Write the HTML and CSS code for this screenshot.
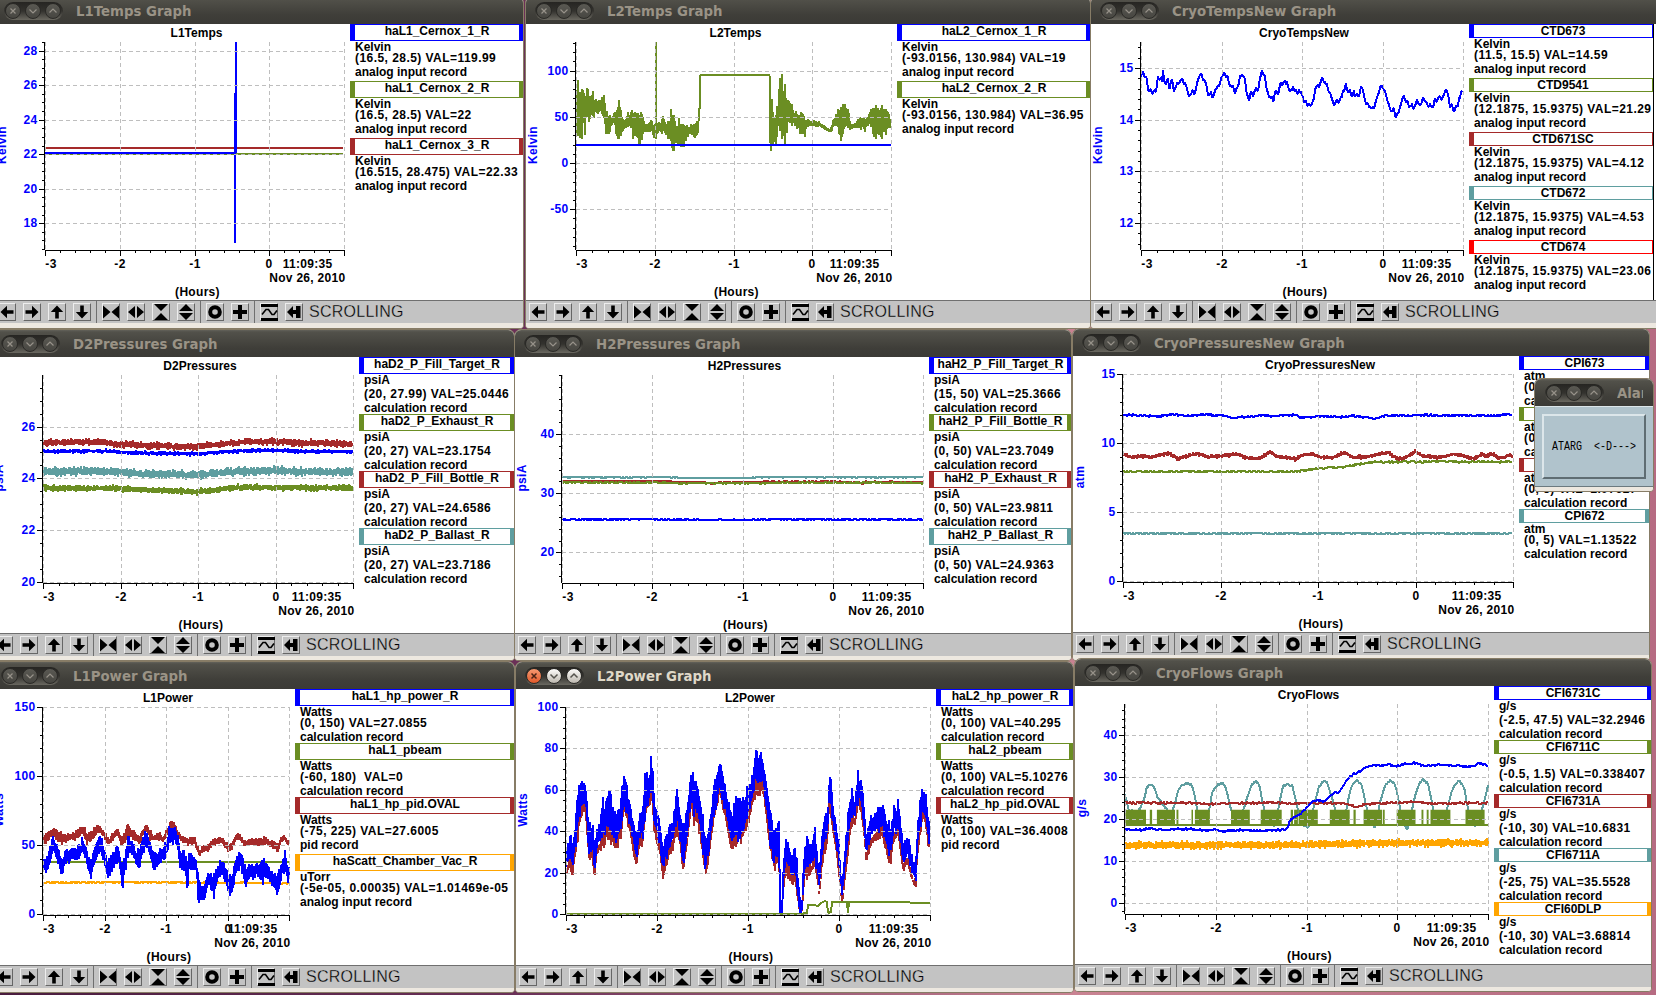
FILE: index.html
```html
<!DOCTYPE html>
<html lang="en">
<head>
    <meta charset="UTF-8">
    <meta name="viewport" content="width=device-width, initial-scale=1.0">
    <title>Target Graphs</title>
    <link rel="stylesheet" href="styles.css">
</head>
<body>
    <main class="desktop" id="desktop"></main>

    <section class="window alarm" id="alarm">
        <header class="titlebar">
            <div class="controls"></div>
            <h2>Alarm Handler</h2>
        </header>
        <div class="alarm-body">
            <button class="alarm-button"><span>ATARG&nbsp; &lt;-D---&gt;</span></button>
        </div>
        <div class="sill"></div>
    </section>

    <script src="graphs.js"></script>
</body>
</html>
```

FILE: styles.css
```css
* { box-sizing: border-box; }
body { margin: 0; width: 1656px; height: 995px; overflow: hidden; position: relative; font-family: "Liberation Sans", Arial, sans-serif; background: linear-gradient(to right, #4a1c3e 0, #6b3058 520px, #c98392 1075px, #b66b82 1656px); }
.desktop { position: relative; width: 1656px; height: 995px; overflow: hidden; }

/* window frame */
.window { position: absolute; display: flex; flex-direction: column; border: 1px solid #877c66; border-radius: 7px 7px 4px 4px; overflow: hidden; background: #ede8e0; }
.titlebar { flex: none; height: 27px; display: flex; align-items: center; padding: 1px 0 0 9px; background: linear-gradient(#63625a 0, #52514a 2px, #3f3e39 18px, #3b3a36 100%); }
.titlebar h2 { margin: 1px 0 0 13px; font: bold 13.3px "DejaVu Sans", sans-serif; color: #9a9386; white-space: nowrap; }
.controls { flex: none; display: flex; gap: 4px; padding: 1px; width: 59px; height: 18px; border-radius: 9px; background: linear-gradient(#262522, #33322e 50%, #6a6860); }
.control { width: 16px; height: 16px; border-radius: 50%; border: 1px solid #2b2a27; background: linear-gradient(#5a5953, #474641); }
.control svg { display: block; width: 14px; height: 14px; fill: none; stroke: #97928a; stroke-width: 1.2; }
.active .titlebar h2 { color: #dfd8c8; }
.active .control { background: linear-gradient(#fdfcfa, #bdb8af); }
.active .control svg { stroke: #55534d; stroke-width: 1.5; }
.active .control:first-child { background: linear-gradient(#f59a72, #e2592a); }
.active .control:first-child svg { stroke: #4a2416; }
.sill { flex: 1; background: #ede8e0; }

/* graph area */
.content { flex: none; display: flex; background: #fff; overflow: hidden; }
.plot { display: block; flex: none; font: bold 12px "Liberation Sans", Arial, sans-serif; letter-spacing: 0.3px; }
.plot .title { letter-spacing: 0; }
.plot text { text-anchor: middle; }
.plot .left { text-anchor: end; }
.plot .y-label { fill: #0000ff; }
.axis { stroke: #000; stroke-width: 1; fill: none; shape-rendering: crispEdges; }
.grid { stroke: #bebebe; stroke-width: 1; stroke-dasharray: 4 3; fill: none; shape-rendering: crispEdges; }
.trace { fill: none; stroke-width: 2; stroke-linejoin: bevel; shape-rendering: crispEdges; }

.legend { flex: 1; min-width: 0; font-weight: bold; font-size: 12px; line-height: 11px; white-space: nowrap; }
.entry { padding-bottom: 1px; }
.pv { border: 1px solid; border-left-width: 5px; border-right-width: 4px; padding: 1px 0 0; display: flex; justify-content: center; }
.pv span { color: #000; }
.pv.deep { padding-bottom: 3px; }
.entry p { margin: 0; padding-left: 5px; position: relative; top: 1px; }
.entry p.deep { padding-bottom: 3px; }
.entry p.range { letter-spacing: 0.45px; }
.cut .legend { flex: none; width: 185px; border-right: 1px solid #000; }
.cut .pv { border-right-width: 1px; }

/* toolbar */
.toolbar { flex: none; height: 23px; display: flex; align-items: center; padding-left: 3px; border-top: 1px solid #6f6f6f; background: #c3c3c3; overflow: hidden; }
.group { display: flex; flex: none; gap: 7px; height: 22px; align-items: center; padding-right: 5px; }
.group + .group { border-left: 1px solid #6f6f6f; padding-left: 5px; }
.tool { width: 18px; height: 18px; padding: 0; border: 1px solid; border-color: #ededed #666 #666 #ededed; background: #c3c3c3; }
.tool svg { display: block; width: 18px; height: 18px; margin: -1px; fill: #000; }
.mode { font-size: 16px; letter-spacing: 0.25px; color: #000; margin-left: 1px; -webkit-text-stroke: 0.3px #c3c3c3; }

/* alarm handler */
.alarm { left: 1534px; top: 378px; width: 120px; height: 114px; }
.alarm .titlebar { padding-left: 10px; }
.alarm .titlebar h2 { width: 26px; overflow: hidden; }
.alarm-body { flex: none; height: 81px; display: flex; padding: 7px; background: #b0c3cc; border-top: 1px solid #dce6ea; border-bottom: 1px solid #6c7a80; }
.alarm-button { flex: 1; padding: 0; border: 2px solid; border-color: #dce6ea #5f6d73 #5f6d73 #dce6ea; background: #b0c3cc; font: 10px "Liberation Mono", monospace; color: #000; }
.alarm-button span { display: block; transform: scaleY(1.3); white-space: pre; }
```

FILE: graphs.js
```js
const BLUE = '#0000ff', OLIVE = '#6b8e23', BROWN = '#a52a2a', TEAL = '#5f9ea0', RED = '#ff0000', ORANGE = '#ffa500';

// small repeatable random so that the traces look the same on each load
let seed = 7;
function rnd() {
    seed = (seed * 16807) % 2147483647;
    return seed / 2147483647;
}

function rows(text, n) {
    const v = text.trim().split(/[\s,;]+/).map(Number);
    const out = [];
    for (let i = 0; i < v.length; i += n) out.push(v.slice(i, i + n));
    return out;
}
const line = (color, pts, noise = 0) => ({ color, pts: rows(pts, 2), noise });
const thick = (color, pts, h) => ({ color, band: rows(pts, 2).map(p => [p[0], p[1] - h, p[1] + h]) });
const band = (color, pts) => ({ color, band: rows(pts, 3) });

const l2power = `155,590,630;160,560,610;168,525,600;173,560,640;180,500,570;187,400,520;192,365,480;200,362,450;207,360,430;213,420,500;
219,490,600;228,480,580;234,560,640;240,500,570;248,500,550;255,430,540;262,450,540;268,390,510;277,400,520;285,450,540;293,460,550;
300,450,530;308,410,500;316,330,430;325,400,470;333,440,510;342,500,570;350,520,600;358,460,540;367,450,530;373,350,470;378,320,430;
385,370,420;391,280,400;397,400,500;405,450,530;412,480,560;422,560,640;430,530,600;440,490,570;450,480,550;460,380,500;468,460,530;
478,500,620;488,470,550;495,380,470;501,325,430;508,370,470;515,350,470;522,420,500;530,450,560;540,540,630;548,500,580;556,450,510;
565,340,450;572,350,420;578,295,380;585,340,430;592,370,450;600,430,500;610,470,560;620,440,540;628,400,530;638,430,520;648,410,500;
656,380,470;664,370,440;672,320,400;677,256,380;685,300,390;693,280,370;700,320,400;706,370,450;714,430,530;722,480,580;730,520,610;
736,480,590;742,490,620;744,700,767;750,740,767;754,590,660;762,540,620;770,550,640;778,590,660;784,560,640;792,620,700;798,690,765;
804,740,767;808,620,700;814,550,620;820,510,640;828,570,620;836,540,610;840,510,600;848,590,650;852,640,690;858,550,620;866,470,560;
875,450,540;880,338,420;885,350,460;890,440,500;898,490,550;906,540,620;912,640,690;916,650,715;922,590,650;930,480,570;938,400,500;
944,400,470;950,430,480;958,335,430;964,360,430;968,350,450;974,430,500;982,530,590;990,480,550;1000,470,530;1010,460,520;
1018,440,510;1026,430,510;1034,480,550;1042,490,580;1050,510,590;1056,450,530;1063,460,520;1069,420,500;1076,490,560;1084,560,620;
1090,540,600;1096,530,590;1104,570,630;1112,610,650;1118,590,670;1122,500,590;1128,440,520;1134,400,480;1139,385,450;1146,420,490;
1152,470,540;1156,500,550`;

const graphs = [
    {
        name: 'L1Temps', frame: [-6, -4, 530, 333], area: [45, 42, 344, 250], legendX: 350,
        unit: 'Kelvin', range: [16.5, 28.5], ticks: [18, 20, 22, 24, 26, 28], minor: 0.5, scan: [134, 1020, 126, 750],
        pvs: [
            ['haL1_Cernox_1_R', BLUE, 'Kelvin', '(16.5, 28.5) VAL=119.99', 'analog input record'],
            ['haL1_Cernox_2_R', OLIVE, 'Kelvin', '(16.5, 28.5) VAL=22', 'analog input record'],
            ['haL1_Cernox_3_R', BROWN, 'Kelvin', '(16.515, 28.475) VAL=22.33', 'analog input record']
        ],
        traces: [
            line(BROWN, '134,444 1020,444', 0.8),
            line(OLIVE, '134,463 1020,463', 0.4),
            line(BLUE, '134,460 698,460 698,729 698,280 701,280 701,126 701,460')
        ]
    },
    {
        name: 'L2Temps', frame: [525, -4, 566, 333], area: [576, 42, 891, 250], legendX: 897,
        unit: 'Kelvin', range: [-93.0156, 130.984], ticks: [-50, 0, 50, 100], minor: 10, scan: [153, 1013, 126, 750],
        pvs: [
            ['haL2_Cernox_1_R', BLUE, 'Kelvin', '(-93.0156, 130.984) VAL=19', 'analog input record'],
            ['haL2_Cernox_2_R', OLIVE, 'Kelvin', '(-93.0156, 130.984) VAL=36.95', 'analog input record']
        ],
        traces: [
            band(OLIVE, `155,235,420;158,235,430;162,265,405;170,265,390;175,270,385;183,255,378;190,265,365;200,285,350;205,295,342;
                215,295,338;222,290,345;229,283,355;235,325,405;243,345,395;255,340,370;262,330,400;270,295,430;277,335,400;283,365,395;
                290,350,385;300,330,380;308,325,405;316,335,425;324,342,445;332,335,425;340,368,395;350,372,395;358,350,395;366,375,415;
                372,360,405;380,365,400;390,345,395;400,372,410;410,340,435;415,340,460;425,360,440;435,365,440;445,375,440;455,378,410;
                465,372,400;475,370,415;485,365,405;489,330,350`),
            line(OLIVE, '371,126 371,400'),
            line(OLIVE, '486,400 489,330 491,322 491,225 680,225 684,232 684,430'),
            band(OLIVE, `684,290,430;688,320,465;694,320,465;700,330,440;706,300,400;709,240,390;714,225,430;720,260,430;728,280,400;
                735,290,370;745,320,375;752,340,375;760,335,390;770,335,410;780,350,415;785,358,375;797,358,385;810,363,378;825,370,382;
                845,385,398;852,380,395;858,355,375;868,340,385;878,310,425;890,312,380;900,340,390;905,370,390;915,370,385;925,355,385;
                935,350,385;945,355,390;955,335,375;962,325,390;970,310,425;980,320,410;990,325,415;1000,325,415;1006,330,380;1012,350,385`),
            line(BLUE, '153,435 1012,435')
        ]
    },
    {
        name: 'CryoTempsNew', frame: [1090, -4, 570, 333], area: [1141, 42, 1463, 250], legendX: 1469, cut: true,
        unit: 'Kelvin', range: [11.5, 15.5], ticks: [12, 13, 14, 15], minor: 0.2, scan: [155, 1040, 126, 750],
        pvs: [
            ['CTD673', BLUE, 'Kelvin', '(11.5, 15.5) VAL=14.59', 'analog input record'],
            ['CTD9541', OLIVE, 'Kelvin', '(12.1875, 15.9375) VAL=21.29', 'analog input record'],
            ['CTD671SC', BROWN, 'Kelvin', '(12.1875, 15.9375) VAL=4.12', 'analog input record'],
            ['CTD672', TEAL, 'Kelvin', '(12.1875, 15.9375) VAL=4.53', 'analog input record'],
            ['CTD674', RED, 'Kelvin', '(12.1875, 15.9375) VAL=23.06', 'analog input record']
        ],
        traces: [
            line(BLUE, `155,228;160,205;164,232;170,235;176,275;182,268;188,280;196,268;202,225;207,245;209,222;212,248;216,208;218,245;
                226,245;229,235;233,265;240,240;246,270;254,245;260,250;266,235;272,252;280,255;288,292;296,275;302,278;312,235;318,213;
                322,232;330,238;340,288;346,275;354,302;359,265;366,255;372,250;376,230;383,210;390,232;396,240;402,262;408,248;414,280;
                422,255;427,228;433,220;440,235;446,280;452,295;458,278;464,285;470,268;476,268;480,262;485,218;494,225;498,250;504,285;
                510,288;519,298;526,270;532,280;536,248;542,258;548,247;556,250;562,268;568,262;578,270;590,275;596,270;600,290;606,312;
                612,308;620,320;628,300;636,262;646,255;654,233;660,255;664,248;672,275;680,302;686,310;692,298;700,303;708,285;712,270;
                718,250;723,272;728,268;734,298;740,278;746,290;754,285;760,250;766,280;770,292;778,318;788,325;798,320;806,290;812,265;
                818,255;826,278;834,310;842,328;850,330;856,348;864,338;870,305;877,288;885,302;892,318;900,308;905,320;914,305;922,312;
                932,292;940,315;950,318;956,325;962,292;968,302;974,288;984,295;994,257;998,285;1004,318;1012,322;1018,332;1024,318;
                1030,295;1038,268`, 9)
        ]
    },
    {
        name: 'D2Pressures', frame: [-9, 329, 524, 332], area: [43, 375, 353, 583], legendX: 359,
        unit: 'psiA', range: [20, 27.99], ticks: [20, 22, 24, 26], minor: 0.5, scan: [130, 1061, 143, 765],
        pvs: [
            ['haD2_P_Fill_Target_R', BLUE, 'psiA', '(20, 27.99) VAL=25.0446', 'calculation record'],
            ['haD2_P_Exhaust_R', OLIVE, 'psiA', '(20, 27) VAL=23.1754', 'calculation record'],
            ['haD2_P_Fill_Bottle_R', BROWN, 'psiA', '(20, 27) VAL=24.6586', 'calculation record'],
            ['haD2_P_Ballast_R', TEAL, 'psiA', '(20, 27) VAL=23.7186', 'calculation record']
        ],
        traces: [
            thick(BROWN, '130,345 310,343 360,350 480,354 540,358 600,356 660,350 740,342 830,342 900,346 980,346 1058,350', 10),
            thick(BLUE, '130,371 310,370 400,375 480,377 600,379 660,373 740,369 830,368 900,371 1058,372', 6),
            thick(TEAL, '130,432 230,430 340,431 430,438 540,440 610,440 680,433 830,428 900,431 1058,433', 12),
            thick(OLIVE, '130,481 350,481 430,486 540,490 600,491 650,487 710,478 900,480 1058,480', 9)
        ]
    },
    {
        name: 'H2Pressures', frame: [514, 329, 558, 332], area: [562, 375, 923, 583], legendX: 929,
        unit: 'psiA', range: [15, 50], ticks: [20, 30, 40], minor: 2, scan: [144, 1138, 143, 767],
        pvs: [
            ['haH2_P_Fill_Target_R', BLUE, 'psiA', '(15, 50) VAL=25.3666', 'calculation record'],
            ['haH2_P_Fill_Bottle_R', OLIVE, 'psiA', '(0, 50) VAL=23.7049', 'calculation record'],
            ['haH2_P_Exhaust_R', BROWN, 'psiA', '(0, 50) VAL=23.9811', 'calculation record'],
            ['haH2_P_Ballast_R', TEAL, 'psiA', '(0, 50) VAL=24.9363', 'calculation record']
        ],
        traces: [
            line(TEAL, '144,450 455,450 470,452 660,452 680,450 1138,450', 0.8),
            line(BROWN, '144,461 430,461 460,464 550,466 556,471 562,466 700,463 890,462 965,466 972,470 980,463 1138,464', 1.2),
            line(OLIVE, '144,465 430,466 460,468 700,468 730,466 1110,466 1138,468', 1),
            line(BLUE, '144,577 380,576 480,577 640,578 720,576 1138,577', 1.6)
        ]
    },
    {
        name: 'CryoPressuresNew', frame: [1072, 328, 578, 333], area: [1123, 374, 1513, 582], legendX: 1519,
        unit: 'atm', range: [0, 15], ticks: [0, 5, 10, 15], minor: 1, scan: [152, 1190, 148, 770],
        pvs: [
            ['CPI673', BLUE, 'atm', '(0, 30) VAL=17.9962', 'calculation record'],
            ['CPI9541', OLIVE, 'atm', '(0, 5) VAL=2.89217', 'calculation record'],
            ['CPI671', BROWN, 'atm', '(0, 5) VAL=2.97627', 'calculation record'],
            ['CPI672', TEAL, 'atm', '(0, 5) VAL=1.13522', 'calculation record']
        ],
        traces: [
            line(BLUE, `152,271;180,270;220,274;250,274;285,268;310,273;345,272;372,268;395,271;425,273;445,279;470,276;500,275;525,272;
                560,274;580,271;610,271;628,279;660,275;700,274;740,277;765,273;800,278;830,281;850,273;880,271;920,273;960,270;1000,273;
                1050,271;1090,273;1130,271;1150,273;1172,267;1188,273`, 2.4),
            thick(BROWN, `152,385;172,397;200,393;225,396;250,390;275,385;300,402;320,393;350,385;375,396;410,392;430,390;455,387;475,396;
                498,401;520,398;543,380;560,394;590,397;612,403;630,390;655,387;680,396;710,398;740,382;765,397;800,395;830,388;855,382;
                885,402;905,398;930,380;950,393;1000,397;1030,387;1050,390;1085,400;1110,387;1120,395;1130,384;1150,398;1165,398;1180,390;
                1190,396`, 6),
            line(OLIVE, `152,440;600,440;625,438;660,431;700,429;745,425;780,417;810,412;860,411;900,411;1000,410;1190,411`, 2.6),
            line(TEAL, '152,625 1190,625', 1.8)
        ]
    },
    {
        name: 'L1Power', frame: [-9, 661, 524, 332], area: [43, 707, 289, 915], legendX: 295,
        unit: 'Watts', range: [0, 150], ticks: [0, 50, 100, 150], minor: 10, scan: [130, 869, 148, 770],
        pvs: [
            ['haL1_hp_power_R', BLUE, 'Watts', '(0, 150) VAL=27.0855', 'calculation record'],
            ['haL1_pbeam', OLIVE, 'Watts', '(-60, 180)  VAL=0', 'calculation record'],
            ['haL1_hp_pid.OVAL', BROWN, 'Watts', '(-75, 225) VAL=27.6005', 'pid record'],
            ['haScatt_Chamber_Vac_R', ORANGE, 'uTorr', '(-5e-05, 0.00035) VAL=1.01469e-05', 'analog input record']
        ],
        traces: [
            line(ORANGE, '130,673 400,672 600,673 869,675', 1.6),
            line(OLIVE, '130,612 869,612'),
            band(BROWN, `130,540,560;140,520,560;150,515,545;160,507,530;172,515,550;185,525,560;200,525,550;215,525,545;228,520,545;
                240,510,535;250,500,530;262,525,555;275,520,550;290,500,530;300,498,525;312,515,535;320,530,558;330,540,560;345,515,545;
                355,510,530;365,535,570;380,505,545;390,502,535;400,515,550;420,535,555;430,510,535;440,500,520;452,515,545;462,535,550;
                480,520,545;490,535,555;500,515,540;512,490,510;525,490,520;535,515,540;545,530,550;560,540,560;575,535,558;585,530,560;
                592,555,575;600,575,597;610,560,585;625,560,580;640,545,565;655,535,555;665,535,555;680,548,570;690,560,585;700,545,570;
                708,530,550;720,525,545;735,545,565;750,540,560;770,540,565;785,538,565;800,535,560;815,550,570;825,545,575;836,560,585;
                845,535,555;855,530,548;868,545,565`),
            band(BLUE, `132,600,630;138,600,655;145,580,640;152,555,610;160,525,580;170,560,600;180,590,630;188,600,650;195,565,620;
                205,570,615;215,570,605;230,570,610;240,560,600;248,530,585;258,565,610;265,590,640;273,605,655;283,570,620;292,545,600;
                300,530,580;307,540,600;315,580,630;327,610,670;335,585,640;345,570,620;355,565,610;362,590,640;368,610,690;375,590,640;
                385,530,590;395,540,590;405,570,610;415,580,640;425,550,600;435,520,570;445,525,570;455,570,620;465,580,630;475,580,625;
                490,565,610;500,550,590;507,510,560;515,505,555;525,498,550;533,520,580;540,570,620;550,575,640;558,590,650;562,610,700;
                568,590,640;580,590,640;590,600,630;594,640,720;605,690,730;614,680,720;625,640,680;635,640,690;642,650,720;650,630,670;
                660,605,650;670,605,650;680,630,680;692,660,720;700,640,690;708,595,660;718,580,630;728,590,640;738,630,690;748,610,655;
                760,620,665;770,610,655;780,610,665;790,600,670;800,610,660;812,630,670;822,640,690;832,650,710;840,640,690;848,600,650;
                855,580,640;862,610,660;868,620,670`)
        ]
    },
    {
        name: 'L2Power', frame: [515, 661, 559, 332], area: [566, 707, 930, 915], legendX: 936, active: true,
        unit: 'Watts', range: [0, 100], ticks: [0, 20, 40, 60, 80, 100], minor: 5, scan: [155, 1157, 148, 770],
        pvs: [
            ['haL2_hp_power_R', BLUE, 'Watts', '(0, 100) VAL=40.295', 'calculation record'],
            ['haL2_pbeam', OLIVE, 'Watts', '(0, 100) VAL=5.10276', 'calculation record'],
            ['haL2_hp_pid.OVAL', BROWN, 'Watts', '(0, 100) VAL=36.4008', 'pid record']
        ],
        traces: [
            // the pid output follows the heater power a little lower
            { color: BROWN, band: rows(l2power, 3).map(p => [p[0], Math.min(p[1] + 60, 762), Math.min(p[2] + 26, 766)]) },
            band(BLUE, l2power),
            line(BLUE, '742,490 744,767 750,767 754,600'),
            line(OLIVE, `155,768;808,768;810,765;818,765;820,741;838,740;850,743;858,735;868,728;874,732;876,765;884,762;886,732;928,732;
                930,765;933,732;1100,732;1106,735;1156,735`)
        ]
    },
    {
        name: 'CryoFlows', frame: [1074, 658, 578, 334], area: [1125, 704, 1488, 914], legendX: 1494, contentH: 278,
        unit: 'g/s', range: [-2.5, 47.5], ticks: [0, 10, 20, 30, 40], minor: 2, scan: [157, 1123, 148, 777],
        pvs: [
            ['CFI6731C', BLUE, 'g/s', '(-2.5, 47.5) VAL=32.2946', 'calculation record'],
            ['CFI6711C', OLIVE, 'g/s', '(-0.5, 1.5) VAL=0.338407', 'calculation record'],
            ['CFI6731A', BROWN, 'g/s', '(-10, 30) VAL=10.6831', 'calculation record'],
            ['CFI6711A', TEAL, 'g/s', '(-25, 75) VAL=35.5528', 'calculation record'],
            ['CFI60DLP', ORANGE, 'g/s', '(-10, 30) VAL=3.68814', 'calculation record']
        ],
        traces: [
            line(TEAL, `157,420;165,455;172,470;190,472;198,460;208,430;216,395;226,388;236,402;245,430;258,450;270,465;280,475;288,455;
                298,410;308,390;320,388;332,388;340,410;348,450;355,500;372,500;382,460;390,410;400,395;412,383;424,392;432,430;442,480;
                455,490;465,480;475,455;484,420;495,390;505,378;516,395;524,450;534,490;555,512;562,480;570,430;578,392;590,388;602,390;
                610,430;620,475;630,510;645,515;655,470;665,430;675,390;688,375;698,390;707,430;716,460;725,500;740,500;748,450;756,410;
                766,382;775,378;787,390;794,425;802,470;812,510;822,515;830,480;838,430;848,395;862,376;873,385;880,410;888,455;898,505;
                908,525;916,490;926,440;936,395;950,370;962,385;970,420;978,470;990,490;1005,490;1015,460;1025,415;1035,390;1047,376;
                1060,400;1068,450;1075,500;1088,515;1098,500;1108,460;1123,395`, 4),
            line(OLIVE, '157,510 1123,510'),
            { color: OLIVE, top: 465, bottom: 513, pulses: rows(`158,213 223,229 242,290 294,299 334,338 343,383 439,489 518,574 598,604
                607,617 619,670 702,755 765,771 792,841 843,848 880,930 946,951 960,965 970,1023 1063,1114`, 2) },
            line(BROWN, '157,444 350,445 380,448 450,446 550,443 600,446 740,445 760,452 775,457 790,449 830,446 900,443 920,441 960,446 1123,444', 2.5),
            line(BLUE, `157,524;200,525;230,521;260,525;300,522;350,524;380,527;395,522;410,530;450,526;500,526;520,530;545,525;580,525;
                590,520;596,495;606,490;620,480;635,465;648,448;662,436;688,440;705,418;728,410;742,385;755,365;770,356;785,348;800,336;
                830,332;860,330;880,336;900,327;930,325;950,333;990,330;1030,332;1075,336;1095,327;1115,328;1123,336`, 2.5),
            thick(ORANGE, '157,571 600,569 860,564 1123,563', 11)
        ]
    }
];

const icons = {
    left: '<path d="M15.5 7.2H9V2.8L2.5 9 9 15.2v-4.4h6.5z"/>',
    right: '<path d="M2.5 7.2H9V2.8L15.5 9 9 15.2v-4.4H2.5z"/>',
    up: '<path d="M7.2 15.5V9H2.8L9 2.5 15.2 9h-4.4v6.5z"/>',
    down: '<path d="M7.2 2.5V9H2.8L9 15.5 15.2 9h-4.4V2.5z"/>',
    shrinkX: '<path d="M1 2.5v13L8.5 9zM17 2.5v13L9.5 9z"/>',
    growX: '<path d="M8 3v12L1 9zM10 3v12l7-6z"/>',
    shrinkY: '<path d="M2 1h14L9 8zM9 10l7 7H2z"/>',
    growY: '<path d="M9 1l7 7H2zM2 10h14l-7 7z"/>',
    reset: '<circle cx="9" cy="9" r="4.8" fill="none" stroke="#000" stroke-width="4"/>',
    plus: '<path d="M7 2h4v5h5v4h-5v5H7v-5H2V7h5z"/>',
    wave: '<path d="M1 1h17v3H1zM1 15h17v3H1z"/><path d="M2 11.5L6 6.5h2.5l3.5 5h2l3-4" fill="none" stroke="#000" stroke-width="1.6"/>',
    end: '<path d="M2 9l6-6v4h3V3h4.500v12H11v-4H8v4z"/>'
};
const groups = [['left', 'right', 'up', 'down'], ['shrinkX', 'growX', 'shrinkY', 'growY'], ['reset', 'plus'], ['wave', 'end']];

const controls = ['M4.5 4.5l5 5M9.5 4.5l-5 5', 'M3.5 5.5L7 9l3.5-3.5', 'M3.5 8.5L7 5l3.5 3.5']
    .map(d => `<span class="control"><svg viewBox="0 0 14 14"><path d="${d}"/></svg></span>`).join('');

function at(pts, x) {
    for (let i = 1; i < pts.length; i++) {
        if (x <= pts[i][0]) {
            const a = pts[i - 1], b = pts[i];
            const t = b[0] === a[0] ? 1 : (x - a[0]) / (b[0] - a[0]);
            return a.map((v, k) => v + (b[k] - v) * t);
        }
    }
    return pts[pts.length - 1];
}

function drawTrace(t, sx, sy, perPx) {
    let d = '';
    if (t.pulses) {
        t.pulses.forEach(p => {
            d += `M${sx(p[0]).toFixed(1)} ${sy(t.top)}H${sx(p[1]).toFixed(1)}V${sy(t.bottom)}H${sx(p[0]).toFixed(1)}Z`;
        });
        return `<path d="${d}" fill="${t.color}"/>`;
    }
    if (t.band) {
        // one vertical stroke per pixel column, ragged at both ends
        const end = t.band[t.band.length - 1][0];
        for (let x = t.band[0][0]; x <= end; x += perPx) {
            const [, hi, lo] = at(t.band, x);
            const h = lo - hi;
            const a = hi + h * 0.3 * rnd() - (rnd() > 0.8 ? h * 0.18 : 0);
            const b = Math.min(lo - h * 0.25 * rnd() + (rnd() > 0.8 ? h * 0.2 : 0), 767);
            d += `M${Math.round(sx(x))} ${sy(a).toFixed(1)}V${sy(b).toFixed(1)}`;
        }
    } else {
        const out = [];
        if (t.noise) {
            const end = t.pts[t.pts.length - 1][0];
            for (let x = t.pts[0][0]; x <= end; x += perPx) {
                out.push([x, at(t.pts, x)[1] + (rnd() - 0.5) * 2 * t.noise]);
            }
        } else {
            out.push(...t.pts);
        }
        // whole pixels keep the two pixel pen solid
        d = 'M' + out.map(p => Math.round(sx(p[0])) + ' ' + Math.round(sy(p[1]))).join('L');
    }
    return `<path class="trace" stroke="${t.color}" d="${d}"/>`;
}

function drawPlot(g) {
    const [x0, y0, x1, y1] = g.area;
    const [s0, s1, s2, s3] = g.scan;
    const left = g.frame[0] + 1, top = g.frame[1] + 28;
    const w = g.legendX - left, h = g.contentH || 276;
    const px = hour => Math.round(x0 + (hour + 3) / 4 * (x1 - x0));
    const py = v => Math.round(y1 - 1 - (v - g.range[0]) / (g.range[1] - g.range[0]) * (y1 - 1 - y0));
    const sx = v => x0 + (v - s0) / (s1 - s0) * (x1 - x0);
    const sy = v => y0 + (v - s2) / (s3 - s2) * (y1 - y0);
    const mid = (x0 + x1) / 2 + 2;

    let axis = `M${x0 - 0.5} ${y0}V${y1}M${x0} ${y1 + 0.5}H${x1 + 1}`;
    let grid = '', labels = '';
    for (let i = 0; i <= 20; i++) {
        axis += `M${px(-3 + i / 5) + 0.5} ${y1 + 1}v${i % 5 ? 2 : 5}`;
    }
    for (let i = -3; i <= 1; i++) grid += `M${px(i) + 0.5} ${y0}V${y1}`;
    for (let n = Math.ceil(g.range[0] / g.minor - 0.001); n * g.minor <= g.range[1] + 0.001; n++) {
        axis += `M${x0 - 1} ${py(n * g.minor) + 0.5}h-2`;
    }
    g.ticks.forEach(v => {
        axis += `M${x0 - 1} ${py(v) + 0.5}h-5`;
        grid += `M${x0} ${py(v) + 0.5}H${x1}`;
        labels += `<text class="y-label left" x="${x0 - 7.5}" y="${py(v) + 4}">${v}</text>`;
    });

    return `<svg class="plot" width="${w}" height="${h}" viewBox="${left} ${top} ${w} ${h}">
        ${g.traces.map(t => drawTrace(t, sx, sy, (s1 - s0) / (x1 - x0))).join('')}
        <path class="grid" d="${grid}"/><path class="axis" d="${axis}"/>${labels}
        <text class="title" x="${mid}" y="${top + 13}">${g.name}</text>
        <text x="${x0 + 6}" y="${y1 + 17.5}">-3</text>
        <text x="${px(-2)}" y="${y1 + 17.5}">-2</text>
        <text x="${px(-1)}" y="${y1 + 17.5}">-1</text>
        <text x="${px(0)}" y="${y1 + 17.5}">0</text>
        <text class="left" x="${x1 - 11.5}" y="${y1 + 17.5}">11:09:35</text>
        <text class="left" x="${x1 + 1.5}" y="${y1 + 31.5}">Nov 26, 2010</text>
        <text x="${mid + 1}" y="${y1 + 45.5}">(Hours)</text>
        <text class="y-label" transform="translate(${left + 11} ${(y0 + y1) / 2 - 1}) rotate(-90)">${g.unit}</text>
    </svg>`;
}

// lines with descenders are taller, as in the X toolkit
const deep = s => /[gpqyj_(,]/.test(s) ? ' deep' : '';

function drawLegend(g) {
    return g.pvs.map(([name, color, unit, range, type]) => `
        <div class="entry">
            <div class="pv${deep(name)}" style="border-color: ${color}"><span>${name}</span></div>
            <p class="${deep(unit)}">${unit}</p>
            <p class="range deep">${range.replace(/ {2}/g, '&nbsp; ')}</p>
            <p class="${deep(type)}">${type}</p>
        </div>`).join('');
}

const toolbar = groups.map(names => `<div class="group">${names.map(n =>
    `<button class="tool"><svg viewBox="0 0 18 18">${icons[n]}</svg></button>`).join('')}</div>`).join('') +
    '<span class="mode">SCROLLING</span>';

const desktop = document.getElementById('desktop');
graphs.forEach(g => {
    const win = document.createElement('section');
    win.className = 'window' + (g.active ? ' active' : '') + (g.cut ? ' cut' : '');
    ['left', 'top', 'width', 'height'].forEach((k, i) => { win.style[k] = g.frame[i] + 'px'; });
    win.innerHTML = `
        <header class="titlebar"><div class="controls">${controls}</div><h2>${g.name} Graph</h2></header>
        <div class="content">${drawPlot(g)}<div class="legend">${drawLegend(g)}</div></div>
        <div class="toolbar">${toolbar}</div>
        <div class="sill"></div>`;
    win.querySelector('.content').style.height = (g.contentH || 276) + 'px';
    desktop.appendChild(win);
});
document.querySelector('#alarm .controls').innerHTML = controls;
```
